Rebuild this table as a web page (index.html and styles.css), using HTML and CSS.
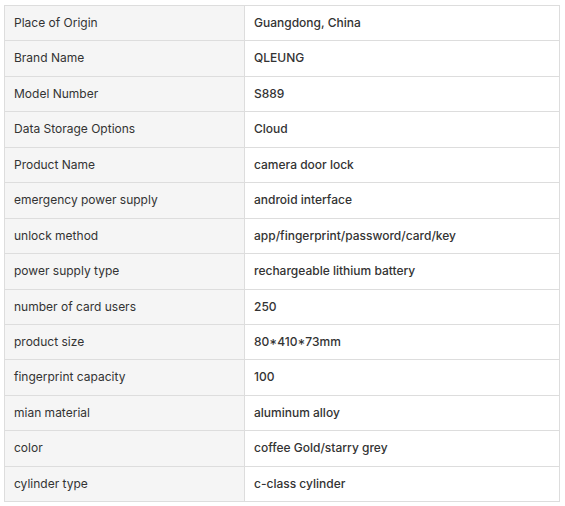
FILE: index.html
```html
<!DOCTYPE html>
<html>
<head>
<meta charset="utf-8">
<link rel="stylesheet" href="styles.css">
</head>
<body>
<table class="spec">
<tbody>
<tr><td class="k">Place of Origin</td><td class="v">Guangdong, China</td></tr>
<tr><td class="k">Brand Name</td><td class="v">QLEUNG</td></tr>
<tr><td class="k">Model Number</td><td class="v">S889</td></tr>
<tr><td class="k">Data Storage Options</td><td class="v">Cloud</td></tr>
<tr><td class="k">Product Name</td><td class="v">camera door lock</td></tr>
<tr><td class="k">emergency power supply</td><td class="v">android interface</td></tr>
<tr><td class="k">unlock method</td><td class="v">app/fingerprint/password/card/key</td></tr>
<tr><td class="k">power supply type</td><td class="v">rechargeable lithium battery</td></tr>
<tr><td class="k">number of card users</td><td class="v">250</td></tr>
<tr><td class="k">product size</td><td class="v">80*410*73mm</td></tr>
<tr><td class="k">fingerprint capacity</td><td class="v">100</td></tr>
<tr><td class="k">mian material</td><td class="v">aluminum alloy</td></tr>
<tr><td class="k">color</td><td class="v">coffee Gold/starry grey</td></tr>
<tr><td class="k">cylinder type</td><td class="v">c-class cylinder</td></tr>
</tbody>
</table>
</body>
</html>
```
FILE: styles.css
```css
html, body {
  margin: 0;
  background: #fff;
}
body {
  padding: 5px 4px;
  font-family: Inter, "Noto Sans", sans-serif;
  font-size: 12px;
  color: #333;
}
.spec {
  border-collapse: collapse;
  width: 556px;
  table-layout: fixed;
}
.spec td {
  border: 1px solid #dddddd;
  padding: 8px 9px;
  line-height: 18.43px;
  vertical-align: middle;
  white-space: nowrap;
}
.spec .k {
  width: 221px;
  background: #f5f5f5;
  font-weight: 400;
}
.spec .v {
  background: #fff;
  font-weight: 500;
}
```
